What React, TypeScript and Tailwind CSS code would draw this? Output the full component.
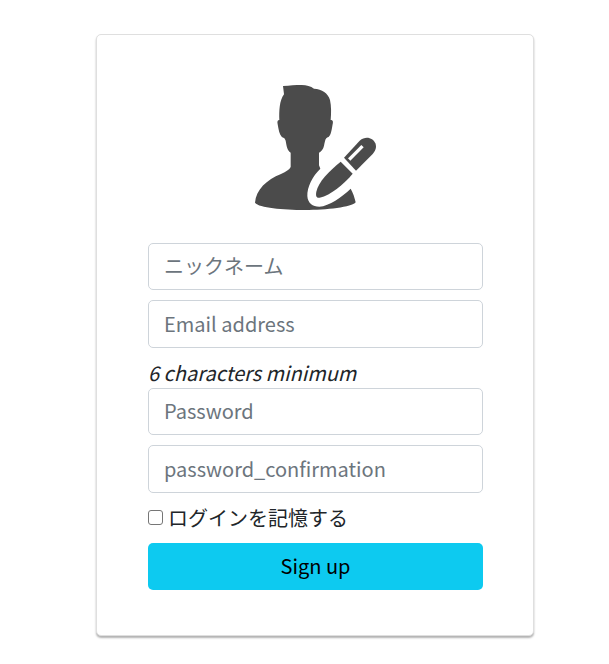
function AvatarIcon() {
  return (
    <svg viewBox="0 0 435 435" className="block h-[145px] w-[145px]" fill="#4b4b4b" aria-hidden="true">
      <path d="M114 33 C135 32 151 30 170 30 C185 30 197 34 207 41 C231 42 249 54 255 75 C259 93 259 114 257 135 C265 135 265 141 262 153 C259 171 256 185 248 187 C241 190 241 196 238 207 C236 219 233 227 222 233 L222 271 L226 281 C203 303 186 336 187 363 C188 384 203 395 223 395 C253 393 290 366 317 341 C324 353 329 368 332 382 C321 397 244 405 180 405 C113 404 43 399 30 383 C33 344 65 314 108 297 C124 290 133 284 137 276 L137 233 C126 225 125 213 122 197 C119 187 115 189 110 185 C103 178 101 165 98 148 C96 139 98 135 103 135 C102 109 103 77 117 58 Z" />
      <path d="M287 260 L323 296 C297 327 257 361 224 368 C213 370 212 361 214 350 C220 320 253 288 287 260 Z" />
      <path d="M297 248 L344 197 C363 181 384 189 391 205 C396 217 391 228 383 237 L333 287 Z" />
      <path d="M316 250 L349 217" stroke="#fff" strokeWidth="10" strokeLinecap="square" fill="none" />
    </svg>
  );
}

const inputClass =
  "block h-[47.5px] w-full rounded-[5px] border border-[#ced4da] bg-white px-[15px] pt-0 pb-0.5 leading-[30px] text-[#212529] outline-none placeholder:text-[#6c757d] placeholder:opacity-100";

export default function App() {
  return (
    <main className="flex h-[664px] w-[609px] items-start bg-white pt-[34px] pl-24 font-['Noto_Sans_CJK_JP',sans-serif] text-[20px] leading-[30px] text-[#212529]">
      <section className="h-[602px] w-[438px] rounded-[5px] border border-[#dfdfdf] bg-white px-[51px] pt-10 shadow-[0_2px_2px_rgba(0,0,0,0.3)]">
        <div className="flex h-[167.75px] justify-start pl-[97px]">
          <AvatarIcon />
        </div>
        <form className="flex w-[335px] flex-col gap-2.5" onSubmit={(e) => e.preventDefault()}>
          <input className={inputClass} type="text" placeholder="ニックネーム" />
          <input className={inputClass} type="email" placeholder="Email address" />
          <div>
            <em className="block h-[30px]">6 characters minimum</em>
            <input className={inputClass} type="password" placeholder="Password" />
          </div>
          <input className={inputClass} type="password" placeholder="password_confirmation" />
          <label className="flex h-[30px] items-center gap-[5px]">
            <input type="checkbox" className="mb-px h-[15px] w-[15px] appearance-none rounded-[3px] border border-[#767676] bg-white" />
            ログインを記憶する
          </label>
          <button type="submit" className="h-[47.5px] rounded-[5px] bg-[#0dcaf0] pb-0.5 text-center text-black">
            Sign up
          </button>
        </form>
      </section>
    </main>
  );
}
